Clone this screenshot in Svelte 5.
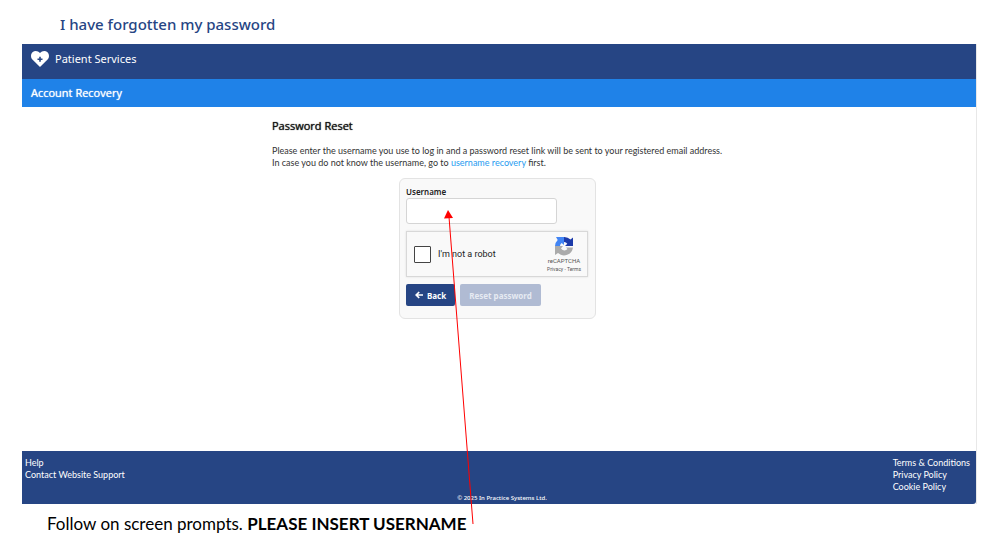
<script lang="ts">
    const leftLinks = ['Help', 'Contact Website Support'];
    const rightLinks = ['Terms & Conditions', 'Privacy Policy', 'Cookie Policy'];

    let username = $state('');
    let notRobot = $state(false);
</script>

<div class="guide">
    <h1>I have forgotten my password</h1>

    <div class="site">
        <header>
            <svg class="logo" viewBox="0 0 18 16" aria-hidden="true">
                <path
                    fill="#fff"
                    d="M9 16 1.4 8.6C-.5 6.600-.4 3 1.500 1.300 3.700-.6 7-.3 9 2.100 11-.3 14.300-.6 16.500 1.300 18.400 3 18.500 6.600 16.600 8.600Z"
                />
                <path fill="#264584" d="M8.200 5.700h1.600v1.700h1.700v1.600H9.800v1.700H8.200V9H6.500V7.400h1.700z" />
            </svg>
            <span>Patient Services</span>
        </header>
        <h2>Account Recovery</h2>

        <main>
            <div class="column">
                <h3>Password Reset</h3>
                <p>
                    Please enter the username you use to log in and a password reset link will be sent to your registered email address.<br />
                    In case you do not know the username, go to <a href="#recovery">username recovery</a> first.
                </p>

                <form onsubmit={(e) => e.preventDefault()}>
                    <label class="name" for="username">Username</label>
                    <div class="field">
                        <input id="username" type="text" bind:value={username} />
                        <svg class="arrow" viewBox="0 0 32 316" aria-hidden="true">
                            <path d="M5 7 29 314" stroke="#f00" fill="none" />
                            <path d="M4 0 0 8.500 9 8z" fill="#f00" />
                        </svg>
                    </div>

                    <div class="captcha">
                        <input id="robot" type="checkbox" bind:checked={notRobot} />
                        <label for="robot">I'm not a robot</label>
                        <div class="brand">
                            <svg viewBox="0 0 20 20" aria-hidden="true">
                                <path fill="#1c3aa9" d="M10 1a9 9 0 0 1 6.500 2.500L19 1.500V10h-8l2.300-2.300A4 4 0 0 0 10 6z" />
                                <path fill="#4285f4" d="M10 1v8L7.700 7A4 4 0 0 0 6 10H1a9 9 0 0 1 2.700-6L2 1h8z" />
                                <path fill="#ababab" d="M1 10h8l-2 2.500a4 4 0 0 0 6.500.5L12 11.500h7A9 9 0 0 1 4 17L1 19z" />
                            </svg>
                            <span class="re">reCAPTCHA</span>
                            <span class="terms"><a href="#privacy">Privacy</a> - <a href="#terms">Terms</a></span>
                        </div>
                    </div>

                    <div class="buttons">
                        <button type="button">
                            <svg viewBox="0 0 8 8" aria-hidden="true">
                                <path d="M4.200 1 1.200 4l3 3M1.200 4H8" fill="none" stroke="#fff" stroke-width="1.700" />
                            </svg>
                            Back
                        </button>
                        <button type="submit" disabled>Reset password</button>
                    </div>
                </form>
            </div>
        </main>

        <footer>
            <nav>
                <ul>
                    {#each leftLinks as link}
                        <li><a href="#footer">{link}</a></li>
                    {/each}
                </ul>
                <ul>
                    {#each rightLinks as link}
                        <li><a href="#footer">{link}</a></li>
                    {/each}
                </ul>
            </nav>
            <small>© 2025 In Practice Systems Ltd.</small>
        </footer>
    </div>

    <p class="caption">Follow on screen prompts. <strong>PLEASE INSERT USERNAME</strong></p>
</div>

<style>
    :global(body) {
        margin: 0;
        background: #fff;
    }

    .guide {
        box-sizing: border-box;
        padding: 0 29px 0 22px;
        font-family: 'Noto Sans', 'Open Sans', sans-serif;
        color: #333;
    }

    h1,
    h2,
    h3,
    p,
    ul {
        margin: 0;
        padding: 0;
    }

    h1 {
        padding: 12px 38px 8px;
        color: #264584;
        font-size: 15px;
        font-weight: 500;
        line-height: 24px;
    }

    .site {
        border-right: 1px solid #e8e8e8;
    }

    header {
        display: flex;
        box-sizing: border-box;
        height: 35px;
        padding: 7px 9px;
        gap: 6px;
        background: #264584;
        color: #fff;
        font-size: 11px;
        line-height: 16px;
    }

    .logo {
        width: 18px;
        height: 16px;
    }

    h2,
    h3 {
        font-family: 'Open Sans', sans-serif;
        font-size: 11px;
        font-weight: 400;
        text-shadow: 0 0 1px currentColor;
    }

    h2 {
        padding: 0 9px;
        background: #1f82e8;
        color: #fff;
        line-height: 28px;
    }

    main {
        box-sizing: border-box;
        min-height: 344px;
        padding: 10px 20px;
    }

    .column {
        max-width: 454px;
        margin: 0 auto;
    }

    h3 {
        margin-bottom: 10px;
        color: #111;
        line-height: 18px;
    }

    p,
    nav {
        font-family: Lato, 'Open Sans', sans-serif;
        font-size: 9px;
        line-height: 12px;
    }

    p a {
        color: #1f9bf0;
        text-decoration: none;
    }

    form {
        box-sizing: border-box;
        width: 197px;
        margin: 9px 0 0 127px;
        padding: 7px 7px 12px 6px;
        border: 1px solid #e3e3e3;
        border-radius: 6px;
        background: #f9f9f9;
    }

    .name {
        display: block;
        color: #222;
        font-size: 8px;
        font-weight: 600;
        line-height: 12px;
    }

    .field {
        position: relative;
        width: 151px;
    }

    .field input {
        display: block;
        box-sizing: border-box;
        width: 100%;
        height: 26px;
        padding: 0 6px;
        border: 1px solid #d5d5d5;
        border-radius: 3px;
        background: #fff;
    }

    .arrow {
        position: absolute;
        top: 12px;
        left: 38px;
        width: 32px;
        height: 316px;
        pointer-events: none;
    }

    .captcha {
        display: flex;
        box-sizing: border-box;
        align-items: center;
        height: 46px;
        margin: 7px 0;
        padding: 0 6px 0 7px;
        border: 1px solid #d8d8d8;
        background: #f9f9f9;
        box-shadow: 0 0 2px #ddd;
        color: #222;
        font-family: Roboto, sans-serif;
        font-size: 9px;
    }

    .captcha input {
        appearance: none;
        width: 17px;
        height: 17px;
        margin: 0 7px 0 0;
        border: 1px solid #444;
        border-radius: 1px;
        background: #fff;
    }

    .brand {
        display: flex;
        flex-direction: column;
        align-items: center;
        margin-left: auto;
        color: #555;
    }

    .brand svg {
        width: 20px;
        height: 20px;
    }

    .re {
        font-size: 6px;
        line-height: 10px;
    }

    .terms {
        font-size: 5px;
        line-height: 6px;
    }

    .terms a {
        color: inherit;
        text-decoration: none;
    }

    .buttons {
        display: flex;
        gap: 5px;
    }

    button {
        display: flex;
        align-items: center;
        height: 22px;
        padding: 0 9px;
        gap: 4px;
        border: 0;
        border-radius: 2px;
        background: #264584;
        color: #fff;
        font-family: inherit;
        font-size: 8px;
        font-weight: 700;
    }

    button svg {
        width: 8px;
        height: 8px;
    }

    button:disabled {
        background: #b0bbd3;
        color: #e6eaf2;
    }

    footer {
        box-sizing: border-box;
        min-height: 53px;
        padding: 6px 6px 0 3px;
        border-bottom-right-radius: 3px;
        background: #264584;
        color: #fff;
    }

    nav {
        display: flex;
        justify-content: space-between;
    }

    ul {
        list-style: none;
    }

    footer a {
        color: #fff;
        text-decoration: none;
    }

    small {
        display: block;
        padding-left: 9px;
        font-size: 6px;
        font-weight: 500;
        line-height: 11px;
        text-align: center;
    }

    .caption {
        padding: 8px 25px;
        color: #000;
        font-size: 17px;
        line-height: 24px;
    }
</style>
